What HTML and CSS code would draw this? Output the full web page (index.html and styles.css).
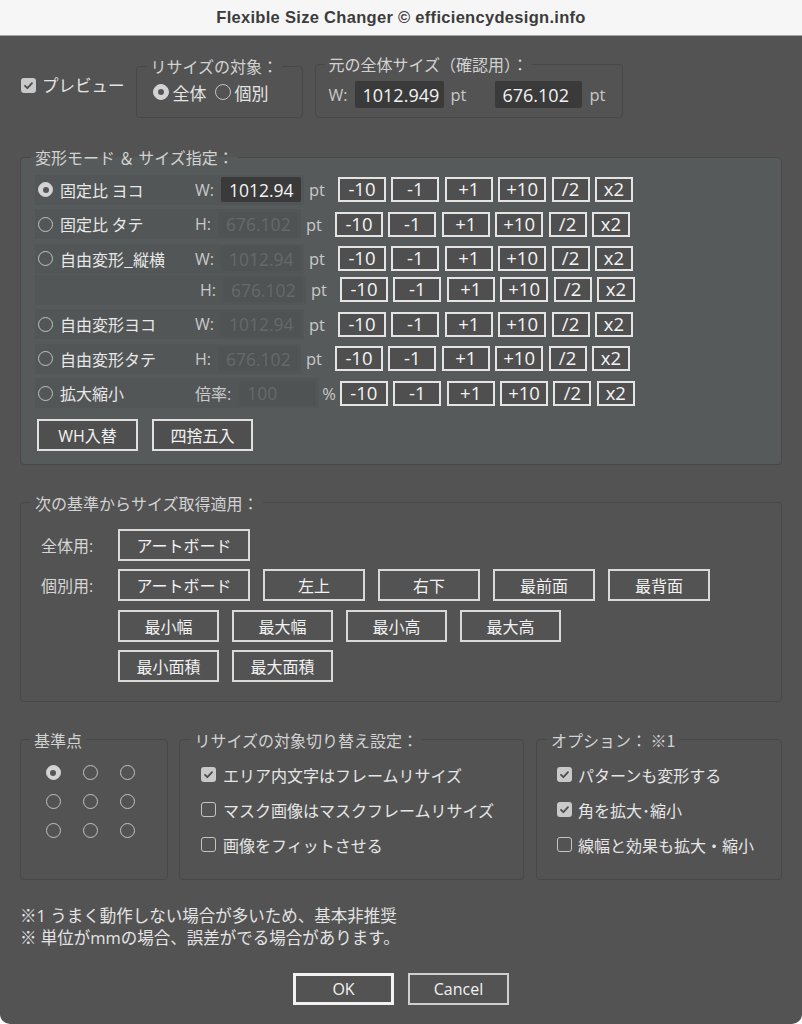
FILE: index.html
```html
<!DOCTYPE html>
<html lang="ja">
<head>
<meta charset="utf-8">
<title>Flexible Size Changer</title>
<link rel="stylesheet" href="styles.css">
</head>
<body>
<div class="window">
  <div class="titlebar">Flexible Size Changer © efficiencydesign.info</div>
  <div class="content">

    <div class="toprow">
      <div class="preview">
        <svg class="cbx" viewBox="0 0 15 15" width="15" height="15"><rect width="15" height="15" rx="3" fill="#c9c9c9"/><path d="M4 7.8 L6.4 10.2 L11 5.2" fill="none" stroke="#4d4d4d" stroke-width="1.8" stroke-linecap="round" stroke-linejoin="round"/></svg>
        <span>プレビュー</span>
      </div>
      <fieldset class="grp g1">
        <legend>リサイズの対象：</legend>
        <div class="g1-in">
          <span class="rd on"></span><span class="rtxt">全体</span>
          <span class="rd rd2"></span><span class="rtxt">個別</span>
        </div>
      </fieldset>
      <fieldset class="grp g2">
        <legend>元の全体サイズ（確認用）：</legend>
        <div class="g2-in">
          <span class="lbl">W:</span>
          <span class="tinp">1012.949</span>
          <span class="unit u1">pt</span>
          <span class="tinp tinp2">676.102</span>
          <span class="unit u2">pt</span>
        </div>
      </fieldset>
    </div>

    <fieldset class="panel mode">
      <legend>変形モード ＆ サイズ指定：</legend>
      <div class="mode-in">
        <div class="mrow">
          <div class="band">
            <span class="rd on"></span><span class="mlabel">固定比 ヨコ</span>
            <span class="lbl">W:</span><span class="minp active">1012.94</span>
          </div>
          <span class="unit munit">pt</span>
          <div class="steps"><span class="sb w">-10</span><span class="sb w">-1</span><span class="sb w">+1</span><span class="sb w">+10</span><span class="sb n">/2</span><span class="sb n">x2</span></div>
        </div>
        <div class="mrow">
          <div class="band">
            <span class="rd"></span><span class="mlabel">固定比 タテ</span>
            <span class="lbl">H:</span><span class="minp">676.102</span>
          </div>
          <span class="unit munit">pt</span>
          <div class="steps"><span class="sb w">-10</span><span class="sb w">-1</span><span class="sb w">+1</span><span class="sb w">+10</span><span class="sb n">/2</span><span class="sb n">x2</span></div>
        </div>
        <div class="mrow tight">
          <div class="band">
            <span class="rd"></span><span class="mlabel">自由変形_縦横</span>
            <span class="lbl">W:</span><span class="minp">1012.94</span>
          </div>
          <span class="unit munit">pt</span>
          <div class="steps"><span class="sb w">-10</span><span class="sb w">-1</span><span class="sb w">+1</span><span class="sb w">+10</span><span class="sb n">/2</span><span class="sb n">x2</span></div>
        </div>
        <div class="mrow">
          <div class="band">
            <span class="rd ghost"></span><span class="mlabel sub"></span>
            <span class="lbl">H:</span><span class="minp">676.102</span>
          </div>
          <span class="unit munit">pt</span>
          <div class="steps"><span class="sb w">-10</span><span class="sb w">-1</span><span class="sb w">+1</span><span class="sb w">+10</span><span class="sb n">/2</span><span class="sb n">x2</span></div>
        </div>
        <div class="mrow">
          <div class="band">
            <span class="rd"></span><span class="mlabel">自由変形ヨコ</span>
            <span class="lbl">W:</span><span class="minp">1012.94</span>
          </div>
          <span class="unit munit">pt</span>
          <div class="steps"><span class="sb w">-10</span><span class="sb w">-1</span><span class="sb w">+1</span><span class="sb w">+10</span><span class="sb n">/2</span><span class="sb n">x2</span></div>
        </div>
        <div class="mrow">
          <div class="band">
            <span class="rd"></span><span class="mlabel">自由変形タテ</span>
            <span class="lbl">H:</span><span class="minp">676.102</span>
          </div>
          <span class="unit munit">pt</span>
          <div class="steps"><span class="sb w">-10</span><span class="sb w">-1</span><span class="sb w">+1</span><span class="sb w">+10</span><span class="sb n">/2</span><span class="sb n">x2</span></div>
        </div>
        <div class="mrow last">
          <div class="band">
            <span class="rd"></span><span class="mlabel">拡大縮小</span>
            <span class="lbl">倍率:</span><span class="minp pct">100</span>
          </div>
          <span class="unit punit">%</span>
          <div class="steps"><span class="sb w">-10</span><span class="sb w">-1</span><span class="sb w">+1</span><span class="sb w">+10</span><span class="sb n">/2</span><span class="sb n">x2</span></div>
        </div>
        <div class="whrow">
          <span class="btn wh">WH入替</span>
          <span class="btn wh">四捨五入</span>
        </div>
      </div>
    </fieldset>

    <fieldset class="panel basis">
      <legend>次の基準からサイズ取得適用：</legend>
      <div class="basis-in">
        <div class="brow">
          <span class="blabel">全体用:</span>
          <span class="btn big">アートボード</span>
        </div>
        <div class="brow">
          <span class="blabel">個別用:</span>
          <span class="btn big">アートボード</span>
          <span class="btn b2">左上</span>
          <span class="btn b2">右下</span>
          <span class="btn b2">最前面</span>
          <span class="btn b2">最背面</span>
        </div>
        <div class="brow">
          <span class="blabel"></span>
          <span class="btn b3">最小幅</span>
          <span class="btn b3">最大幅</span>
          <span class="btn b3">最小高</span>
          <span class="btn b3">最大高</span>
        </div>
        <div class="brow">
          <span class="blabel"></span>
          <span class="btn b3">最小面積</span>
          <span class="btn b3">最大面積</span>
        </div>
      </div>
    </fieldset>

    <div class="lowrow">
      <fieldset class="panel pa">
        <legend>基準点</legend>
        <div class="grid9">
          <span class="rd on"></span><span class="rd"></span><span class="rd"></span>
          <span class="rd"></span><span class="rd"></span><span class="rd"></span>
          <span class="rd"></span><span class="rd"></span><span class="rd"></span>
        </div>
      </fieldset>
      <fieldset class="panel pb">
        <legend>リサイズの対象切り替え設定：</legend>
        <div class="chk-list">
          <div class="chk">
            <svg class="cbx" viewBox="0 0 15 15" width="15" height="15"><rect width="15" height="15" rx="3" fill="#c9c9c9"/><path d="M4 7.8 L6.4 10.2 L11 5.2" fill="none" stroke="#4d4d4d" stroke-width="1.8" stroke-linecap="round" stroke-linejoin="round"/></svg>
            <span>エリア内文字はフレームリサイズ</span>
          </div>
          <div class="chk">
            <span class="cbo"></span>
            <span>マスク画像はマスクフレームリサイズ</span>
          </div>
          <div class="chk">
            <span class="cbo"></span>
            <span>画像をフィットさせる</span>
          </div>
        </div>
      </fieldset>
      <fieldset class="panel pc">
        <legend>オプション： ※1</legend>
        <div class="chk-list">
          <div class="chk">
            <svg class="cbx" viewBox="0 0 15 15" width="15" height="15"><rect width="15" height="15" rx="3" fill="#c9c9c9"/><path d="M4 7.8 L6.4 10.2 L11 5.2" fill="none" stroke="#4d4d4d" stroke-width="1.8" stroke-linecap="round" stroke-linejoin="round"/></svg>
            <span>パターンも変形する</span>
          </div>
          <div class="chk">
            <svg class="cbx" viewBox="0 0 15 15" width="15" height="15"><rect width="15" height="15" rx="3" fill="#c9c9c9"/><path d="M4 7.8 L6.4 10.2 L11 5.2" fill="none" stroke="#4d4d4d" stroke-width="1.8" stroke-linecap="round" stroke-linejoin="round"/></svg>
            <span>角を拡大･縮小</span>
          </div>
          <div class="chk">
            <span class="cbo"></span>
            <span>線幅と効果も拡大・縮小</span>
          </div>
        </div>
      </fieldset>
    </div>

    <div class="notes">
      <div>※1 うまく動作しない場合が多いため、基本非推奨</div>
      <div>※ 単位がmmの場合、誤差がでる場合があります。</div>
    </div>

    <div class="actions">
      <span class="btn ok">OK</span>
      <span class="btn cancel">Cancel</span>
    </div>

  </div>
</div>
</body>
</html>
```

FILE: styles.css
```css
* { box-sizing: border-box; }
html, body { margin: 0; padding: 0; background: #ffffff; }
body {
  font-family: "Open Sans", "Noto Sans CJK JP", sans-serif;
  font-size: 16px;
  color: #e4e4e4;
}

.window {
  width: 802px;
  height: 1024px;
  background: #535353;
  border-radius: 0 0 10px 10px;
  overflow: hidden;
}

.titlebar {
  height: 36px;
  background: #f6f6f6;
  border-bottom: 1px solid #a6a6a6;
  color: #3c3c3c;
  font-family: "Liberation Sans", Arial, sans-serif;
  font-weight: bold;
  font-size: 16.5px;
  letter-spacing: 0.3px;
  display: flex;
  align-items: center;
  justify-content: center;
  padding-bottom: 1px;
}

.content { padding: 0 20px; }

/* generic */
fieldset {
  margin: 0;
  padding: 0;
  border: 1px solid #474848;
  border-radius: 4px;
  min-width: 0;
}
legend {
  padding: 0 4px;
  font-size: 16px;
  line-height: 20px;
  color: #d2d2d2;
  font-family: "Noto Sans CJK JP", sans-serif;
}

.lbl { color: #c9c9c9; font-family: "Open Sans", "Noto Sans CJK JP", sans-serif; }
.unit { color: #c9c9c9; font-size: 16.5px; }

.rd {
  display: inline-block;
  width: 15px;
  height: 15px;
  border-radius: 50%;
  border: 1.2px solid #c2c2c2;
  flex: none;
  position: relative;
}
.rd.on { background: #d3d3d3; border-color: #d3d3d3; }
.rd.on::after {
  content: "";
  position: absolute;
  left: 50%;
  top: 50%;
  width: 6px;
  height: 6px;
  margin: -3px 0 0 -3px;
  border-radius: 50%;
  background: #555555;
}
.rd.ghost { visibility: hidden; }

.cbx { flex: none; display: block; }
.cbo {
  flex: none;
  width: 15px;
  height: 15px;
  border: 1.3px solid #c4c4c4;
  border-radius: 3px;
}

.btn {
  display: flex;
  align-items: center;
  justify-content: center;
  border: 2px solid #d9d9d9;
  color: #f2f2f2;
  height: 32px;
  font-size: 16px;
  flex: none;
}

/* top row */
.toprow {
  display: flex;
  align-items: flex-start;
  margin-top: 18px;
  padding-left: 1px;
}
.preview {
  display: flex;
  align-items: center;
  gap: 6px;
  margin-top: 21px;
  height: 20px;
  font-size: 16.5px;
}
.g1 { margin-left: 11px; margin-top: 2px; width: 167px; }
.g1 legend { margin-left: 10px; }
.g1-in {
  display: flex;
  align-items: center;
  height: 32px;
  margin-bottom: 9px;
  padding-left: 16px;
  font-size: 17px;
}
.g1-in .rd { width: 16px; height: 16px; }
.rtxt { margin-left: 4px; }
.g1-in .rd2 { margin-left: 8px; }

.g2 { margin-left: 12px; width: 308px; }
.g2 legend { margin-left: 9px; }
.g2-in {
  display: flex;
  align-items: center;
  padding: 7px 0 9px 13px;
}
.tinp {
  height: 27px;
  background: #3a3a3a;
  border-radius: 2px;
  color: #f2f2f2;
  font-size: 18px;
  display: flex;
  align-items: center;
  padding-left: 7px;
  overflow: hidden;
  white-space: nowrap;
}
.g2-in .tinp { width: 89px; margin-left: 8px; }
.g2-in .tinp2 { width: 87px; margin-left: 29px; }
.u1 { margin-left: 6px; }
.u2 { margin-left: 7px; }

/* mode panel */
.panel { background: #535353; }
.mode { margin-top: 29px; background: #565a5a; }
.mode legend { margin-left: 10px; }
.mode-in { padding: 7.5px 0 13px 14px; }
.mrow {
  display: flex;
  align-items: center;
  height: 30px;
  margin-bottom: 4.5px;
}
.mrow.tight { margin-bottom: 1px; }
.mrow.last { margin-bottom: 10.5px; }
.band {
  display: flex;
  align-items: center;
  height: 30px;
  background: #525656;
  padding: 0 3px;
}
.mlabel {
  width: 135px;
  margin-left: 7px;
  font-family: "Noto Sans CJK JP", sans-serif;
  font-size: 16px;
  color: #e8e8e8;
}
.mlabel.sub { width: 140px; }
.minp {
  width: 80px;
  height: 25px;
  margin-left: 7px;
  background: #4f5353;
  border-radius: 2px;
  color: #656a6a;
  font-size: 17.5px;
  display: flex;
  align-items: center;
  padding-left: 8px;
}
.minp.active { background: #3a3a3a; color: #f4f4f4; }
.minp.pct { width: 77px; margin-left: 8px; }
.munit { margin-left: 5px; margin-right: 13px; }
.punit { margin-left: 3px; margin-right: 4px; }
.steps { display: flex; gap: 5.4px; }
.sb {
  height: 25px;
  border: 2px solid #e4e4e4;
  background: #4f4f4f;
  color: #f4f4f4;
  display: flex;
  align-items: center;
  justify-content: center;
  font-size: 18.5px;
  line-height: 1;
}
.sb.w { width: 48px; }
.sb.n { width: 38px; }

.whrow { display: flex; gap: 14px; margin-left: 2px; }
.btn.wh { width: 101px; background: #4f4f4f; border-color: #e0e0e0; }

/* basis panel */
.basis { margin-top: 28px; }
.basis legend { margin-left: 10px; }
.basis-in { padding: 16px 0 18.5px 20px; }
.brow { display: flex; align-items: center; gap: 13px; margin-bottom: 8.5px; }
.brow:last-child { margin-bottom: 0; }
.blabel { width: 64px; flex: none; color: #d6d6d6; }
.btn.big { width: 132px; }
.btn.b2 { width: 102px; }
.btn.b3 { width: 101px; }

/* low row */
.lowrow { display: flex; margin-top: 28px; }
.lowrow .panel { height: 150px; }
.pa { width: 148px; }
.pa legend { margin-left: 9px; }
.pb { width: 345px; margin-left: 11px; }
.pb legend { margin-left: 10.5px; }
.pc { width: 246px; margin-left: 12px; }
.pc legend { margin-left: 10px; }

.grid9 {
  display: grid;
  grid-template-columns: repeat(3, 15px);
  grid-auto-rows: 15px;
  column-gap: 22px;
  row-gap: 14px;
  padding: 15.5px 0 0 24.5px;
}
.chk-list {
  display: flex;
  flex-direction: column;
  gap: 15px;
  padding-top: 15px;
}
.chk { display: flex; align-items: center; height: 20px; gap: 7px; }
.pb .chk-list { padding-left: 21px; }
.pc .chk-list { padding-left: 20px; }
.pc .chk { gap: 6px; }
.chk span:last-child { font-family: "Noto Sans CJK JP", sans-serif; color: #e6e6e6; }

/* notes & actions */
.notes {
  margin-top: 25px;
  line-height: 22px;
  font-size: 16.5px;
  color: #e4e4e4;
}
.actions {
  display: flex;
  justify-content: center;
  gap: 14px;
  margin-top: 24px;
}
.btn.ok { width: 101px; border: 3px solid #f2f2f2; }
.btn.cancel { width: 101px; border: 2px solid #cfcfcf; }
```
